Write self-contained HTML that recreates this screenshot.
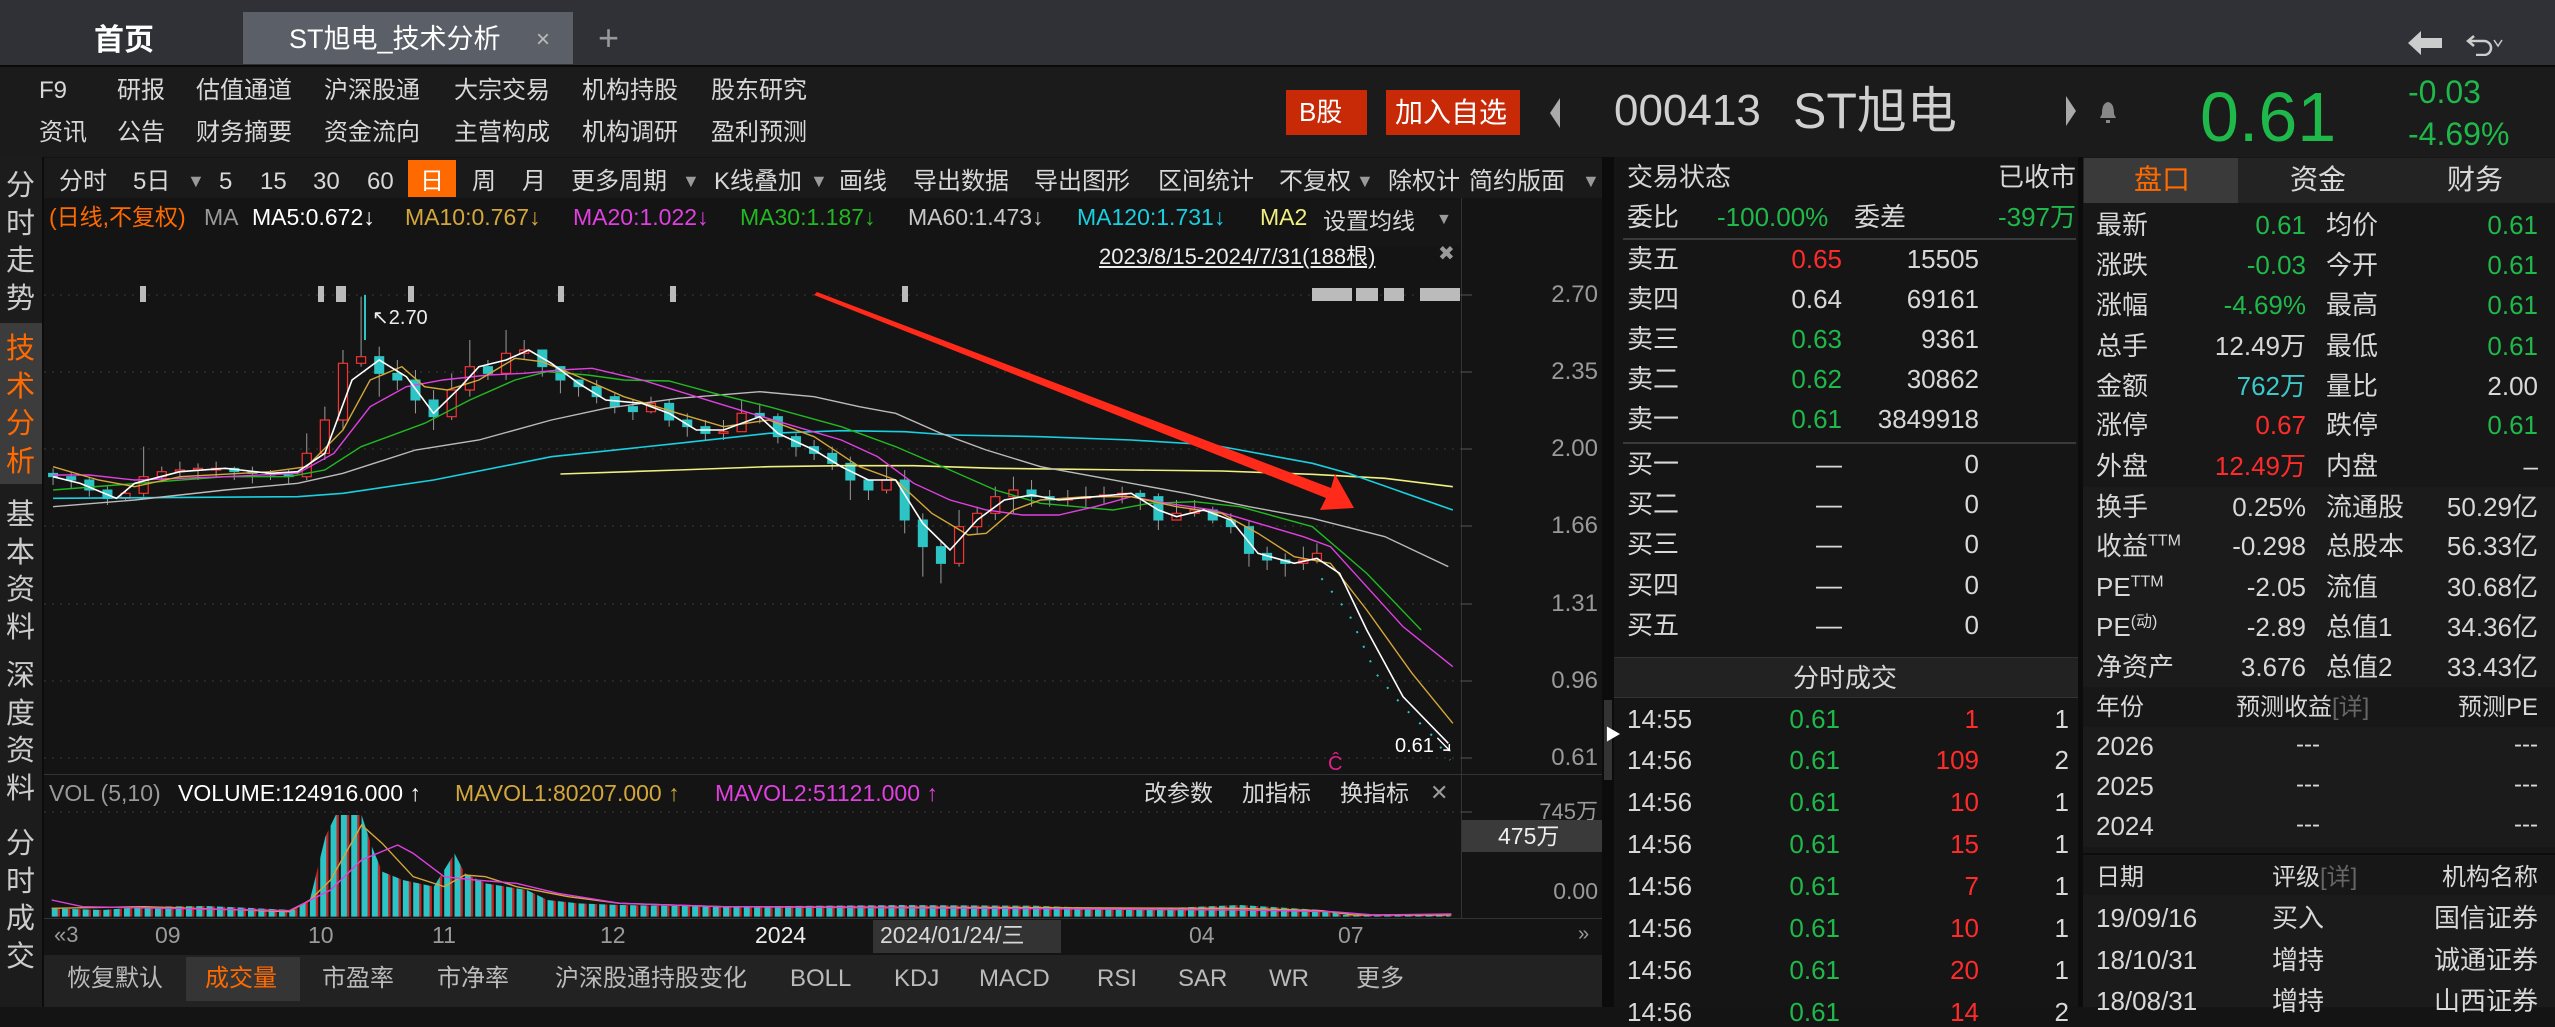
<!DOCTYPE html>
<html><head><meta charset="utf-8">
<style>
*{margin:0;padding:0;box-sizing:border-box}
body{width:2555px;height:1007px;background:#141414;overflow:hidden;position:relative;font-family:"Liberation Sans","Noto Sans CJK SC",sans-serif;color:#d8d8d8}
.t{position:absolute;white-space:nowrap;line-height:1}
.r{text-align:right}
.g{color:#1fb84a}.red{color:#ff2b2b}.cy{color:#3cc8c8}.or{color:#ff6a00}.gr{color:#9a9a9a}
.box{position:absolute}
</style></head><body>

<!-- tab bar -->
<div class="box" style="left:0;top:0;width:2555px;height:65px;background:#2f3136"></div>
<div class="box" style="left:243px;top:12px;width:330px;height:52px;background:#5b6068"></div>
<div class="t" style="left:94px;top:26px;font-size:30px;font-weight:bold;color:#fff">首页</div>
<div class="t" style="left:289px;top:26px;font-size:27px;color:#fff">ST旭电_技术分析</div>
<div class="t" style="left:536px;top:28px;font-size:24px;color:#bbb">×</div>
<div class="t" style="left:598px;top:20px;font-size:36px;color:#999">+</div>
<svg class="box" style="left:2408px;top:30px" width="96" height="26">
<polygon points="0,13 13,1 13,8 34,8 34,18 13,18 13,25" fill="#ccc"/>
<path d="M66 6 L60 11 L66 16 M60 11 H76 A7 7 0 0 1 76 25 H68" fill="none" stroke="#ccc" stroke-width="2.5"/>
<path d="M86 10 L90 16 L94 10" fill="none" stroke="#ccc" stroke-width="1.5"/>
</svg>

<!-- menu area -->
<div class="box" style="left:0;top:65px;width:2555px;height:92px;background:#1b1b1b;border-top:2px solid #0a0a0a"></div>
<div class="t" style="left:39px;top:79px;font-size:24px">F9</div>
<div class="t" style="left:117px;top:79px;font-size:24px">研报</div>
<div class="t" style="left:196px;top:79px;font-size:24px">估值通道</div>
<div class="t" style="left:324px;top:79px;font-size:24px">沪深股通</div>
<div class="t" style="left:454px;top:79px;font-size:24px">大宗交易</div>
<div class="t" style="left:582px;top:79px;font-size:24px">机构持股</div>
<div class="t" style="left:711px;top:79px;font-size:24px">股东研究</div>
<div class="t" style="left:39px;top:121px;font-size:24px">资讯</div>
<div class="t" style="left:117px;top:121px;font-size:24px">公告</div>
<div class="t" style="left:196px;top:121px;font-size:24px">财务摘要</div>
<div class="t" style="left:324px;top:121px;font-size:24px">资金流向</div>
<div class="t" style="left:454px;top:121px;font-size:24px">主营构成</div>
<div class="t" style="left:582px;top:121px;font-size:24px">机构调研</div>
<div class="t" style="left:711px;top:121px;font-size:24px">盈利预测</div>
<div class="box" style="left:1286px;top:90px;width:81px;height:45px;background:#c82a08"></div>
<div class="t" style="left:1299px;top:99px;font-size:26px;color:#fff">B股</div>
<div class="box" style="left:1386px;top:90px;width:134px;height:45px;background:#c82a08"></div>
<div class="t" style="left:1395px;top:99px;font-size:28px;color:#fff">加入自选</div>
<svg class="box" style="left:1548px;top:98px" width="14" height="30"><polygon points="12,0 2,15 12,30" fill="#aaa"/></svg>
<div class="t" style="left:1614px;top:89px;font-size:44px;color:#d0d0d0">000413</div>
<div class="t" style="left:1793px;top:86px;font-size:50px;color:#d0d0d0">ST旭电</div>
<svg class="box" style="left:2064px;top:96px" width="14" height="30"><polygon points="2,0 12,15 2,30" fill="#aaa"/></svg>
<svg class="box" style="left:2098px;top:100px" width="20" height="24"><path d="M10 2 C5 3 4 8 4 14 L2 18 L18 18 L16 14 C16 8 15 3 10 2Z M8 20 h4 v3 h-4z" fill="#888"/></svg>
<div class="t g" style="left:2200px;top:82px;font-size:70px">0.61</div>
<div class="t g" style="left:2408px;top:76px;font-size:32px">-0.03</div>
<div class="t g" style="left:2408px;top:118px;font-size:32px">-4.69%</div>

<!-- left nav -->
<div class="box" style="left:0;top:157px;width:44px;height:850px;background:#1c1c1c;border-right:2px solid #0c0c0c"></div>
<div class="box" style="left:0;top:323px;width:42px;height:161px;background:#3c3c3c"></div>
<div class="t" style="left:6px;top:168px;font-size:29px;line-height:37.5px;width:30px;color:#ccc;white-space:normal">分时走势</div>
<div class="t" style="left:6px;top:331px;font-size:29px;line-height:37.5px;width:30px;color:#ff6a00;white-space:normal">技术分析</div>
<div class="t" style="left:6px;top:497px;font-size:29px;line-height:37.5px;width:30px;color:#ccc;white-space:normal">基本资料</div>
<div class="t" style="left:6px;top:658px;font-size:29px;line-height:37.5px;width:30px;color:#ccc;white-space:normal">深度资料</div>
<div class="t" style="left:6px;top:826px;font-size:29px;line-height:37.5px;width:30px;color:#ccc;white-space:normal">分时成交</div>

<!-- chart toolbar -->
<div class="box" style="left:44px;top:158px;width:1558px;height:40px;background:#1a1a1a"></div>
<div class="box" style="left:408px;top:160px;width:48px;height:37px;background:#ff6a00"></div>
<div class="t" style="left:59px;top:170px;font-size:24px">分时</div>
<div class="t" style="left:133px;top:170px;font-size:24px">5日</div>
<div class="t gr" style="left:187px;top:172px;font-size:18px">▼</div>
<div class="t" style="left:219px;top:170px;font-size:24px">5</div>
<div class="t" style="left:260px;top:170px;font-size:24px">15</div>
<div class="t" style="left:313px;top:170px;font-size:24px">30</div>
<div class="t" style="left:367px;top:170px;font-size:24px">60</div>
<div class="t" style="left:420px;top:170px;font-size:24px;color:#fff">日</div>
<div class="t" style="left:472px;top:170px;font-size:24px">周</div>
<div class="t" style="left:522px;top:170px;font-size:24px">月</div>
<div class="t" style="left:571px;top:170px;font-size:24px">更多周期</div>
<div class="t gr" style="left:682px;top:172px;font-size:18px">▼</div>
<div class="t" style="left:714px;top:170px;font-size:24px">K线叠加</div>
<div class="t gr" style="left:810px;top:172px;font-size:18px">▼</div>
<div class="t" style="left:839px;top:170px;font-size:24px">画线</div>
<div class="t" style="left:913px;top:170px;font-size:24px">导出数据</div>
<div class="t" style="left:1034px;top:170px;font-size:24px">导出图形</div>
<div class="t" style="left:1158px;top:170px;font-size:24px">区间统计</div>
<div class="t" style="left:1279px;top:170px;font-size:24px">不复权</div>
<div class="t gr" style="left:1356px;top:172px;font-size:18px">▼</div>
<div class="t" style="left:1388px;top:170px;font-size:24px">除权计</div>
<div class="t" style="left:1469px;top:170px;font-size:24px">简约版面</div>
<div class="t gr" style="left:1582px;top:172px;font-size:18px">▼</div>

<!-- MA legend -->
<div class="t" style="left:49px;top:206px;font-size:23px;color:#ff6a00">(日线,不复权)</div>
<div class="t gr" style="left:204px;top:206px;font-size:23px">MA</div>
<div class="t" style="left:252px;top:206px;font-size:23px;color:#fff">MA5:0.672↓</div>
<div class="t" style="left:405px;top:206px;font-size:23px;color:#d4a73a">MA10:0.767↓</div>
<div class="t" style="left:573px;top:206px;font-size:23px;color:#e040e0">MA20:1.022↓</div>
<div class="t" style="left:740px;top:206px;font-size:23px;color:#22b822">MA30:1.187↓</div>
<div class="t" style="left:908px;top:206px;font-size:23px;color:#c8c8c8">MA60:1.473↓</div>
<div class="t" style="left:1077px;top:206px;font-size:23px;color:#18d0e0">MA120:1.731↓</div>
<div class="t" style="left:1260px;top:206px;font-size:23px;color:#f0f080">MA2</div>
<div class="box" style="left:1310px;top:200px;width:150px;height:46px;background:#161616"></div>
<div class="t" style="left:1323px;top:210px;font-size:23px">设置均线</div>
<div class="t gr" style="left:1436px;top:212px;font-size:16px">▼</div>
<div class="t" style="left:1099px;top:246px;font-size:22px;text-decoration:underline;color:#eee">2023/8/15-2024/7/31(188根)</div>
<div class="t gr" style="left:1438px;top:244px;font-size:20px">✖</div>

<!-- chart borders -->
<div class="box" style="left:1461px;top:198px;width:1px;height:720px;background:#333"></div>
<div class="box" style="left:1602px;top:157px;width:12px;height:850px;background:#0c0c0c"></div>
<div class="box" style="left:44px;top:774px;width:1558px;height:1px;background:#333"></div>

<svg class="box" style="left:0;top:0" width="2555" height="1007">
<defs>
<pattern id="vp" width="10" height="10" patternUnits="userSpaceOnUse"><rect x="0" y="0" width="6" height="10" fill="#2cc4c4"/><rect x="6" y="0" width="2" height="10" fill="#d02020"/></pattern>
</defs>
<g stroke="#3a3a3a" stroke-dasharray="2 6" stroke-width="1">
<line x1="44" y1="295" x2="1461" y2="295"/><line x1="44" y1="372" x2="1461" y2="372"/><line x1="44" y1="449" x2="1461" y2="449"/><line x1="44" y1="526" x2="1461" y2="526"/><line x1="44" y1="604" x2="1461" y2="604"/><line x1="44" y1="681" x2="1461" y2="681"/><line x1="44" y1="758" x2="1461" y2="758"/><line x1="44" y1="812" x2="1461" y2="812"/>
</g>
<g stroke="#555"><line x1="1461" y1="295" x2="1472" y2="295"/><line x1="1461" y1="372" x2="1472" y2="372"/><line x1="1461" y1="449" x2="1472" y2="449"/><line x1="1461" y1="526" x2="1472" y2="526"/><line x1="1461" y1="604" x2="1472" y2="604"/><line x1="1461" y1="681" x2="1472" y2="681"/><line x1="1461" y1="758" x2="1472" y2="758"/><line x1="1461" y1="812" x2="1472" y2="812"/></g>
<!-- markers -->
<g fill="#bbb">
<rect x="140" y="286" width="6" height="16"/><rect x="318" y="286" width="6" height="16"/><rect x="336" y="286" width="10" height="16"/><rect x="408" y="286" width="6" height="16"/><rect x="558" y="286" width="6" height="16"/><rect x="670" y="286" width="6" height="16"/><rect x="902" y="286" width="6" height="16"/>
<rect x="1312" y="288" width="40" height="13"/><rect x="1356" y="288" width="22" height="13"/><rect x="1384" y="288" width="20" height="13"/><rect x="1420" y="288" width="40" height="13"/>
</g>
<line x1="365" y1="295" x2="365" y2="340" stroke="#2cc4c4" stroke-width="2"/>
<text x="372" y="324" font-size="20" fill="#eee" font-family="Liberation Sans">↖2.70</text>
<g transform="translate(44,280) scale(0.906,0.33333)" fill="none" stroke-width="1.6">
<path vector-effect="non-scaling-stroke" stroke="#999" stroke-width="1" d="M10 565V615M30 575V625M50 590V650M70 620V675M90 630V660M110 500V650M130 560V600M150 545V590M170 550V600M190 545V590M210 560V600M230 560V610M250 570V600M270 570V610M290 460V600M310 380V540M330 210V450M350 50V260M370 200V350M390 240V330M410 270V400M430 330V450M450 280V420M470 180V350M490 240V300M510 150V300M530 180V240M550 230V290M570 260V340M590 300V350M610 300V370M630 340V400M650 360V420M670 350V400M690 360V440M710 400V470M730 420V480M750 420V480M770 360V430M790 370V430M810 400V490M830 460V530M850 480V540M870 500V570M890 530V660M910 600V660M930 560V640M950 570V760M970 700V890M990 780V910M1010 690V860M1030 680V760M1050 620V720M1070 590V700M1090 600V680M1110 630V680M1130 630V680M1150 620V680M1170 620V670M1190 620V670M1210 630V690M1230 640V750M1250 660V720M1270 660V710M1290 680V730M1310 700V760M1330 720V860M1350 800V870M1370 820V890M1390 800V870M1405 790V850"/>
<path vector-effect="non-scaling-stroke" fill="#2cc4c4" stroke="#2cc4c4" stroke-width="1" d="M5 580h10v10h-10zM25 590h10v10h-10zM45 600h10v30h-10zM65 630h10v25h-10zM205 565h10v10h-10zM225 575h10v5h-10zM245 580h10v5h-10zM265 585h10v5h-10zM365 230h10v50h-10zM385 280h10v20h-10zM405 300h10v60h-10zM425 360h10v50h-10zM485 260h10v20h-10zM545 210h10v50h-10zM565 260h10v40h-10zM585 300h10v20h-10zM605 320h10v30h-10zM625 350h10v30h-10zM645 380h10v15h-10zM685 370h10v50h-10zM705 420h10v20h-10zM725 440h10v20h-10zM785 400h10v10h-10zM805 410h10v60h-10zM825 470h10v30h-10zM845 500h10v20h-10zM865 520h10v30h-10zM885 550h10v50h-10zM905 600h10v30h-10zM945 600h10v120h-10zM965 720h10v80h-10zM985 800h10v50h-10zM1085 630h10v20h-10zM1105 650h10v10h-10zM1205 640h10v10h-10zM1225 650h10v70h-10zM1285 690h10v30h-10zM1305 720h10v20h-10zM1325 740h10v80h-10zM1345 820h10v20h-10zM1365 840h10v10h-10z"/>
<path vector-effect="non-scaling-stroke" fill="#141414" stroke="#ff3030" stroke-width="1.2" d="M85 640h10v15h-10zM105 590h10v50h-10zM125 575h10v15h-10zM145 570h10v5h-10zM165 565h10v5h-10zM185 565h10v5h-10zM285 520h10v70h-10zM305 420h10v100h-10zM325 250h10v170h-10zM345 230h10v20h-10zM445 330h10v80h-10zM465 260h10v70h-10zM505 220h10v60h-10zM525 210h10v10h-10zM665 370h10v25h-10zM745 455h10v5h-10zM765 400h10v55h-10zM925 600h10v30h-10zM1005 740h10v110h-10zM1025 700h10v40h-10zM1045 650h10v50h-10zM1065 630h10v20h-10zM1125 655h10v5h-10zM1145 650h10v5h-10zM1165 645h10v5h-10zM1185 640h10v5h-10zM1245 700h10v20h-10zM1265 690h10v10h-10zM1385 840h10v10h-10zM1400 820h10v20h-10z"/>
<polyline vector-effect="non-scaling-stroke" stroke="#f0f080" stroke-width="1.6" points="570,582 700,570 800,560 880,557 960,557 1050,565 1200,570 1300,573 1400,583 1480,595 1555,620"/>
<polyline vector-effect="non-scaling-stroke" stroke="#18d0e0" stroke-width="1.6" points="10,655 280,650 330,640 430,600 560,530 700,490 800,460 880,452 950,455 1000,465 1100,470 1200,480 1290,495 1400,550 1440,580 1555,690"/>
<polyline vector-effect="non-scaling-stroke" stroke="#bbbbbb" stroke-width="1.4" points="10,680 100,660 200,630 280,610 330,580 410,510 480,480 560,420 620,385 700,355 790,335 850,350 900,380 940,400 990,460 1040,510 1100,560 1180,600 1260,640 1330,680 1400,715 1480,770 1550,860"/>
<polyline vector-effect="non-scaling-stroke" stroke="#22b822" stroke-width="1.4" points="10,630 80,615 200,590 270,590 310,570 350,500 420,430 470,360 520,300 555,275 600,285 640,300 690,303 740,340 800,380 880,440 940,500 1000,570 1050,630 1100,670 1180,690 1220,670 1270,665 1320,680 1400,740 1460,880 1520,1050"/>
<polyline vector-effect="non-scaling-stroke" stroke="#e040e0" stroke-width="1.4" points="10,585 50,585 100,600 200,590 280,580 320,520 360,380 400,320 440,300 490,285 530,280 570,270 605,265 660,300 720,350 780,400 830,440 880,480 920,530 960,610 1000,660 1040,690 1080,705 1120,705 1160,680 1200,650 1240,670 1290,690 1340,730 1390,770 1420,800 1460,920 1500,1040 1555,1160"/>
<polyline vector-effect="non-scaling-stroke" stroke="#d4a73a" stroke-width="1.4" points="10,560 60,600 100,620 150,590 250,575 290,560 330,450 360,300 395,260 420,320 445,330 480,300 520,235 550,245 590,290 640,350 700,400 750,440 800,420 850,470 900,560 940,600 980,700 1020,765 1040,760 1070,690 1100,660 1150,650 1200,650 1250,680 1300,700 1340,760 1380,830 1420,850 1460,990 1510,1180 1555,1330"/>
<polyline vector-effect="non-scaling-stroke" stroke="#ffffff" stroke-width="1.6" points="10,590 40,610 80,655 100,610 150,575 200,565 250,580 280,575 310,520 340,300 370,240 400,290 430,400 460,320 480,260 510,240 535,210 560,250 590,310 620,360 660,370 690,400 720,450 750,450 790,410 810,460 850,510 880,560 910,600 940,600 970,730 1000,810 1030,720 1060,660 1090,645 1120,660 1160,650 1200,640 1230,690 1250,710 1280,690 1310,720 1340,820 1380,850 1405,835 1430,880 1460,1050 1500,1250 1550,1390"/>
<polyline vector-effect="non-scaling-stroke" stroke="#2cc4c4" stroke-width="2" stroke-dasharray="2 14" points="1410,895 1440,1000 1470,1180 1500,1280 1530,1360 1552,1440"/>
</g>
<polygon points="814,295 817,292 1331,488 1335,474 1354,508 1320,510 1326,498" fill="#ff2a1a"/>
<text x="1328" y="770" font-size="20" fill="#e0208a" font-family="Liberation Sans">Ĉ</text>
<g transform="translate(0,740) scale(1.033,0.33333)">
<polygon fill="url(#vp)" points="50,530 50,505 100,510 140,500 200,498 250,505 285,510 300,480 315,290 325,225 350,225 360,320 370,395 390,420 420,440 440,340 450,400 470,430 490,440 510,450 530,480 560,490 600,495 700,500 870,495 1000,497 1100,508 1200,495 1280,510 1300,525 1400,525 1405,530"/>
<polyline fill="none" vector-effect="non-scaling-stroke" stroke="#d4a73a" stroke-width="1.4" points="50,505 140,500 280,515 300,480 320,420 350,255 370,310 400,410 430,440 450,405 470,410 500,440 550,470 600,490 700,500 1200,505 1280,512 1310,525 1405,525"/>
<polyline fill="none" vector-effect="non-scaling-stroke" stroke="#e040e0" stroke-width="1.4" points="50,480 80,500 280,512 320,450 350,360 385,315 400,340 430,410 460,420 500,430 540,460 600,490 700,500 1200,510 1290,515 1330,525 1405,522"/>
</g>
</svg>

<div class="t" style="left:1395px;top:736px;font-size:20px;color:#fff">0.61↘</div>
<div class="t gr" style="left:1510px;top:283px;font-size:24px;width:88px;text-align:right">2.70</div>
<div class="t gr" style="left:1510px;top:360px;font-size:24px;width:88px;text-align:right">2.35</div>
<div class="t gr" style="left:1510px;top:437px;font-size:24px;width:88px;text-align:right">2.00</div>
<div class="t gr" style="left:1510px;top:514px;font-size:24px;width:88px;text-align:right">1.66</div>
<div class="t gr" style="left:1510px;top:592px;font-size:24px;width:88px;text-align:right">1.31</div>
<div class="t gr" style="left:1510px;top:669px;font-size:24px;width:88px;text-align:right">0.96</div>
<div class="t gr" style="left:1510px;top:746px;font-size:24px;width:88px;text-align:right">0.61</div>

<div class="t gr" style="left:49px;top:782px;font-size:23px">VOL (5,10)</div>
<div class="t" style="left:178px;top:782px;font-size:23px;color:#fff">VOLUME:124916.000 ↑</div>
<div class="t" style="left:455px;top:782px;font-size:23px;color:#d4a73a">MAVOL1:80207.000 ↑</div>
<div class="t" style="left:715px;top:782px;font-size:23px;color:#e040e0">MAVOL2:51121.000 ↑</div>
<div class="t" style="left:1144px;top:782px;font-size:23px">改参数</div>
<div class="t" style="left:1242px;top:782px;font-size:23px">加指标</div>
<div class="t" style="left:1340px;top:782px;font-size:23px">换指标</div>
<div class="t gr" style="left:1430px;top:782px;font-size:22px">✕</div>
<div class="t gr" style="left:1510px;top:801px;font-size:22px;width:88px;text-align:right">745万</div>
<div class="box" style="left:1462px;top:820px;width:140px;height:32px;background:#3a3a3a"></div>
<div class="t" style="left:1498px;top:825px;font-size:23px;color:#eee">475万</div>
<div class="t gr" style="left:1510px;top:880px;font-size:23px;width:88px;text-align:right">0.00</div>

<div class="box" style="left:44px;top:918px;width:1558px;height:1px;background:#333"></div>
<div class="t gr" style="left:54px;top:924px;font-size:22px">«3</div>
<div class="t gr" style="left:155px;top:924px;font-size:23px">09</div>
<div class="t gr" style="left:308px;top:924px;font-size:23px">10</div>
<div class="t gr" style="left:432px;top:924px;font-size:23px">11</div>
<div class="t gr" style="left:600px;top:924px;font-size:23px">12</div>
<div class="t" style="left:755px;top:924px;font-size:23px;color:#eee">2024</div>
<div class="box" style="left:873px;top:920px;width:188px;height:33px;background:#333"></div>
<div class="t" style="left:880px;top:924px;font-size:23px">2024/01/24/三</div>
<div class="t gr" style="left:1189px;top:924px;font-size:23px">04</div>
<div class="t gr" style="left:1338px;top:924px;font-size:23px">07</div>
<div class="t gr" style="left:1578px;top:924px;font-size:20px">»</div>

<div class="box" style="left:44px;top:955px;width:1558px;height:52px;background:#222"></div>
<div class="box" style="left:186px;top:957px;width:114px;height:44px;background:#353535"></div>
<div class="t" style="left:67px;top:967px;font-size:24px;color:#bbb">恢复默认</div>
<div class="t or" style="left:205px;top:967px;font-size:24px">成交量</div>
<div class="t" style="left:322px;top:967px;font-size:24px;color:#bbb">市盈率</div>
<div class="t" style="left:437px;top:967px;font-size:24px;color:#bbb">市净率</div>
<div class="t" style="left:555px;top:967px;font-size:24px;color:#bbb">沪深股通持股变化</div>
<div class="t" style="left:790px;top:967px;font-size:24px;color:#bbb">BOLL</div>
<div class="t" style="left:894px;top:967px;font-size:24px;color:#bbb">KDJ</div>
<div class="t" style="left:979px;top:967px;font-size:24px;color:#bbb">MACD</div>
<div class="t" style="left:1097px;top:967px;font-size:24px;color:#bbb">RSI</div>
<div class="t" style="left:1178px;top:967px;font-size:24px;color:#bbb">SAR</div>
<div class="t" style="left:1269px;top:967px;font-size:24px;color:#bbb">WR</div>
<div class="t" style="left:1356px;top:967px;font-size:24px;color:#bbb">更多</div>

<div class="box" style="left:1614px;top:157px;width:464px;height:850px;background:#151515"></div>
<div class="box" style="left:2078px;top:157px;width:5px;height:850px;background:#0c0c0c"></div>
<div class="box" style="left:1604px;top:700px;width:8px;height:80px;background:#333"></div>
<div class="t" style="left:1605px;top:728px;font-size:16px;color:#fff">▶</div>
<div class="t" style="left:1627px;top:164px;font-size:26px">交易状态</div>
<div class="t r" style="right:479px;top:164px;font-size:26px">已收市</div>
<div class="t" style="left:1627px;top:204px;font-size:26px">委比</div>
<div class="t g" style="left:1717px;top:204px;font-size:26px">-100.00%</div>
<div class="t" style="left:1854px;top:204px;font-size:26px">委差</div>
<div class="t g r" style="right:479px;top:204px;font-size:26px">-397万</div>
<div class="box" style="left:1623px;top:238px;width:453px;height:2px;background:#3a3a3a"></div>
<div class="box" style="left:1623px;top:442px;width:453px;height:2px;background:#3a3a3a"></div>

<div class="t" style="left:1627px;top:246px;font-size:26px">卖五</div><div class="t red r" style="right:713px;top:246px;font-size:26px">0.65</div><div class="t r" style="right:576px;top:246px;font-size:26px">15505</div>
<div class="t" style="left:1627px;top:286px;font-size:26px">卖四</div><div class="t r" style="right:713px;top:286px;font-size:26px">0.64</div><div class="t r" style="right:576px;top:286px;font-size:26px">69161</div>
<div class="t" style="left:1627px;top:326px;font-size:26px">卖三</div><div class="t g r" style="right:713px;top:326px;font-size:26px">0.63</div><div class="t r" style="right:576px;top:326px;font-size:26px">9361</div>
<div class="t" style="left:1627px;top:366px;font-size:26px">卖二</div><div class="t g r" style="right:713px;top:366px;font-size:26px">0.62</div><div class="t r" style="right:576px;top:366px;font-size:26px">30862</div>
<div class="t" style="left:1627px;top:406px;font-size:26px">卖一</div><div class="t g r" style="right:713px;top:406px;font-size:26px">0.61</div><div class="t r" style="right:576px;top:406px;font-size:26px">3849918</div>

<div class="t" style="left:1627px;top:451px;font-size:26px">买一</div><div class="t r" style="right:713px;top:451px;font-size:26px">—</div><div class="t r" style="right:576px;top:451px;font-size:26px">0</div>
<div class="t" style="left:1627px;top:491px;font-size:26px">买二</div><div class="t r" style="right:713px;top:491px;font-size:26px">—</div><div class="t r" style="right:576px;top:491px;font-size:26px">0</div>
<div class="t" style="left:1627px;top:531px;font-size:26px">买三</div><div class="t r" style="right:713px;top:531px;font-size:26px">—</div><div class="t r" style="right:576px;top:531px;font-size:26px">0</div>
<div class="t" style="left:1627px;top:572px;font-size:26px">买四</div><div class="t r" style="right:713px;top:572px;font-size:26px">—</div><div class="t r" style="right:576px;top:572px;font-size:26px">0</div>
<div class="t" style="left:1627px;top:612px;font-size:26px">买五</div><div class="t r" style="right:713px;top:612px;font-size:26px">—</div><div class="t r" style="right:576px;top:612px;font-size:26px">0</div>

<div class="box" style="left:1614px;top:657px;width:464px;height:41px;background:#222;border-top:1px solid #333;border-bottom:1px solid #333"></div>
<div class="t" style="left:1793px;top:665px;font-size:26px">分时成交</div>

<div class="t" style="left:1627px;top:706px;font-size:26px">14:55</div><div class="t g r" style="right:715px;top:706px;font-size:26px">0.61</div><div class="t red r" style="right:576px;top:706px;font-size:26px">1</div><div class="t r" style="right:486px;top:706px;font-size:26px">1</div>
<div class="t" style="left:1627px;top:747px;font-size:26px">14:56</div><div class="t g r" style="right:715px;top:747px;font-size:26px">0.61</div><div class="t red r" style="right:576px;top:747px;font-size:26px">109</div><div class="t r" style="right:486px;top:747px;font-size:26px">2</div>
<div class="t" style="left:1627px;top:789px;font-size:26px">14:56</div><div class="t g r" style="right:715px;top:789px;font-size:26px">0.61</div><div class="t red r" style="right:576px;top:789px;font-size:26px">10</div><div class="t r" style="right:486px;top:789px;font-size:26px">1</div>
<div class="t" style="left:1627px;top:831px;font-size:26px">14:56</div><div class="t g r" style="right:715px;top:831px;font-size:26px">0.61</div><div class="t red r" style="right:576px;top:831px;font-size:26px">15</div><div class="t r" style="right:486px;top:831px;font-size:26px">1</div>
<div class="t" style="left:1627px;top:873px;font-size:26px">14:56</div><div class="t g r" style="right:715px;top:873px;font-size:26px">0.61</div><div class="t red r" style="right:576px;top:873px;font-size:26px">7</div><div class="t r" style="right:486px;top:873px;font-size:26px">1</div>
<div class="t" style="left:1627px;top:915px;font-size:26px">14:56</div><div class="t g r" style="right:715px;top:915px;font-size:26px">0.61</div><div class="t red r" style="right:576px;top:915px;font-size:26px">10</div><div class="t r" style="right:486px;top:915px;font-size:26px">1</div>
<div class="t" style="left:1627px;top:957px;font-size:26px">14:56</div><div class="t g r" style="right:715px;top:957px;font-size:26px">0.61</div><div class="t red r" style="right:576px;top:957px;font-size:26px">20</div><div class="t r" style="right:486px;top:957px;font-size:26px">1</div>
<div class="t" style="left:1627px;top:999px;font-size:26px">14:56</div><div class="t g r" style="right:715px;top:999px;font-size:26px">0.61</div><div class="t red r" style="right:576px;top:999px;font-size:26px">14</div><div class="t r" style="right:486px;top:999px;font-size:26px">2</div>

<div class="box" style="left:2083px;top:157px;width:472px;height:850px;background:#171717"></div>
<div class="box" style="left:2083px;top:158px;width:472px;height:45px;background:#232323"></div>
<div class="box" style="left:2084px;top:158px;width:154px;height:45px;background:#3a3a3a"></div>
<div class="t or" style="left:2134px;top:166px;font-size:28px">盘口</div>
<div class="t" style="left:2290px;top:166px;font-size:28px">资金</div>
<div class="t" style="left:2447px;top:166px;font-size:28px">财务</div>
<div class="box" style="left:2083px;top:487px;width:472px;height:200px;background:#1b1b1b"></div>
<div class="box" style="left:2083px;top:727px;width:472px;height:120px;background:#1b1b1b"></div>

<div class="t" style="left:2096px;top:212px;font-size:26px">最新</div><div class="t g r" style="right:249px;top:212px;font-size:26px">0.61</div><div class="t" style="left:2326px;top:212px;font-size:26px">均价</div><div class="t g r" style="right:17px;top:212px;font-size:26px">0.61</div>
<div class="t" style="left:2096px;top:252px;font-size:26px">涨跌</div><div class="t g r" style="right:249px;top:252px;font-size:26px">-0.03</div><div class="t" style="left:2326px;top:252px;font-size:26px">今开</div><div class="t g r" style="right:17px;top:252px;font-size:26px">0.61</div>
<div class="t" style="left:2096px;top:292px;font-size:26px">涨幅</div><div class="t g r" style="right:249px;top:292px;font-size:26px">-4.69%</div><div class="t" style="left:2326px;top:292px;font-size:26px">最高</div><div class="t g r" style="right:17px;top:292px;font-size:26px">0.61</div>
<div class="t" style="left:2096px;top:333px;font-size:26px">总手</div><div class="t r" style="right:249px;top:333px;font-size:26px">12.49万</div><div class="t" style="left:2326px;top:333px;font-size:26px">最低</div><div class="t g r" style="right:17px;top:333px;font-size:26px">0.61</div>
<div class="t" style="left:2096px;top:373px;font-size:26px">金额</div><div class="t cy r" style="right:249px;top:373px;font-size:26px">762万</div><div class="t" style="left:2326px;top:373px;font-size:26px">量比</div><div class="t r" style="right:17px;top:373px;font-size:26px">2.00</div>
<div class="t" style="left:2096px;top:412px;font-size:26px">涨停</div><div class="t red r" style="right:249px;top:412px;font-size:26px">0.67</div><div class="t" style="left:2326px;top:412px;font-size:26px">跌停</div><div class="t g r" style="right:17px;top:412px;font-size:26px">0.61</div>
<div class="t" style="left:2096px;top:453px;font-size:26px">外盘</div><div class="t red r" style="right:249px;top:453px;font-size:26px">12.49万</div><div class="t" style="left:2326px;top:453px;font-size:26px">内盘</div><div class="t r" style="right:17px;top:453px;font-size:26px">–</div>
<div class="t" style="left:2096px;top:494px;font-size:26px">换手</div><div class="t r" style="right:249px;top:494px;font-size:26px">0.25%</div><div class="t" style="left:2326px;top:494px;font-size:26px">流通股</div><div class="t r" style="right:17px;top:494px;font-size:26px">50.29亿</div>
<div class="t" style="left:2096px;top:533px;font-size:26px">收益<sup style="font-size:16px">TTM</sup></div><div class="t r" style="right:249px;top:533px;font-size:26px">-0.298</div><div class="t" style="left:2326px;top:533px;font-size:26px">总股本</div><div class="t r" style="right:17px;top:533px;font-size:26px">56.33亿</div>
<div class="t" style="left:2096px;top:574px;font-size:26px">PE<sup style="font-size:16px">TTM</sup></div><div class="t r" style="right:249px;top:574px;font-size:26px">-2.05</div><div class="t" style="left:2326px;top:574px;font-size:26px">流值</div><div class="t r" style="right:17px;top:574px;font-size:26px">30.68亿</div>
<div class="t" style="left:2096px;top:614px;font-size:26px">PE<sup style="font-size:16px">(动)</sup></div><div class="t r" style="right:249px;top:614px;font-size:26px">-2.89</div><div class="t" style="left:2326px;top:614px;font-size:26px">总值1</div><div class="t r" style="right:17px;top:614px;font-size:26px">34.36亿</div>
<div class="t" style="left:2096px;top:654px;font-size:26px">净资产</div><div class="t r" style="right:249px;top:654px;font-size:26px">3.676</div><div class="t" style="left:2326px;top:654px;font-size:26px">总值2</div><div class="t r" style="right:17px;top:654px;font-size:26px">33.43亿</div>

<div class="t" style="left:2096px;top:696px;font-size:24px">年份</div><div class="t" style="left:2236px;top:696px;font-size:24px">预测收益<span style="color:#666">[详]</span></div><div class="t r" style="right:17px;top:696px;font-size:24px">预测PE</div>
<div class="t" style="left:2096px;top:733px;font-size:26px">2026</div><div class="t" style="left:2296px;top:733px;font-size:24px">---</div><div class="t r" style="right:17px;top:733px;font-size:24px">---</div>
<div class="t" style="left:2096px;top:773px;font-size:26px">2025</div><div class="t" style="left:2296px;top:773px;font-size:24px">---</div><div class="t r" style="right:17px;top:773px;font-size:24px">---</div>
<div class="t" style="left:2096px;top:813px;font-size:26px">2024</div><div class="t" style="left:2296px;top:813px;font-size:24px">---</div><div class="t r" style="right:17px;top:813px;font-size:24px">---</div>

<div class="box" style="left:2083px;top:853px;width:472px;height:2px;background:#0c0c0c"></div>
<div class="t" style="left:2096px;top:866px;font-size:24px">日期</div><div class="t" style="left:2272px;top:866px;font-size:24px">评级<span style="color:#666">[详]</span></div><div class="t r" style="right:17px;top:866px;font-size:24px">机构名称</div>
<div class="box" style="left:2083px;top:895px;width:472px;height:112px;background:#1b1b1b"></div>
<div class="t" style="left:2096px;top:905px;font-size:26px">19/09/16</div><div class="t" style="left:2272px;top:905px;font-size:26px">买入</div><div class="t r" style="right:17px;top:905px;font-size:26px">国信证券</div>
<div class="t" style="left:2096px;top:947px;font-size:26px">18/10/31</div><div class="t" style="left:2272px;top:947px;font-size:26px">增持</div><div class="t r" style="right:17px;top:947px;font-size:26px">诚通证券</div>
<div class="t" style="left:2096px;top:988px;font-size:26px">18/08/31</div><div class="t" style="left:2272px;top:988px;font-size:26px">增持</div><div class="t r" style="right:17px;top:988px;font-size:26px">山西证券</div>

</body></html>
